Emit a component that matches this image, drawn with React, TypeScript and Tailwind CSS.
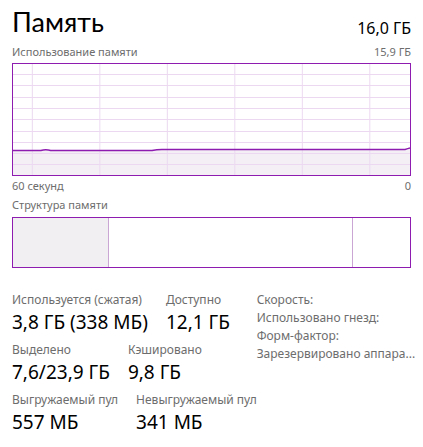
import React from 'react'

const font = { fontFamily: '"Noto Sans", "Open Sans", sans-serif' }

function UsageChart() {
  const vLines = [19, 87, 155, 223, 291, 359]
  const hLines = [10, 21, 33, 44, 55, 67, 78, 89, 100]
  const line = 'M0,86.5 L28,86.5 Q33,85 38,86.5 L140,86.5 Q145,85.5 150,85.5 L395,85.5 Q398,84.5 400,84'
  return (
    <div className="h-[113px] border border-[#8e1cb0] bg-white">
      <svg width="100%" height="100%" viewBox="0 0 400 111" preserveAspectRatio="none" className="block">
        <path d={`${line} L400,111 L0,111 Z`} fill="#f3eff5" />
        {hLines.map((y) => (
          <line key={y} x1="0" x2="400" y1={y + 0.5} y2={y + 0.5} stroke="#ecd9f1" strokeWidth="1" />
        ))}
        {vLines.map((x) => (
          <line key={x} x1={x + 0.5} x2={x + 0.5} y1="0" y2="111" stroke="#ecd9f1" strokeWidth="1" />
        ))}
        <path d={line} fill="none" stroke="#8e1cb0" strokeWidth="1.5" />
      </svg>
    </div>
  )
}

function Stat({ label, value }: { label: string; value: string }) {
  return (
    <div className="flex flex-col whitespace-nowrap">
      <span className="text-[12px] leading-[18px] text-[#6d6d6d]">{label}</span>
      <span className="text-[19px] leading-[26px] text-black">{value}</span>
    </div>
  )
}

export default function App() {
  return (
    <div className="w-[423px] h-[447px] bg-white px-3 overflow-hidden" style={font}>
      <div className="flex items-end justify-between pt-[2px]">
        <h1 className="text-[27px] leading-[40px] text-black" style={{ fontFamily: 'Lato, "Noto Sans", sans-serif' }}>
          Память
        </h1>
        <span className="text-[16px] leading-[22px] text-black mb-[3px]">16,0 ГБ</span>
      </div>
      <div className="flex justify-between text-[11px] leading-[16px] text-[#6d6d6d] mt-[2px] mb-[3px]">
        <span>Использование памяти</span>
        <span>15,9 ГБ</span>
      </div>
      <UsageChart />
      <div className="flex justify-between text-[11px] leading-[20px] text-[#6d6d6d]">
        <span>60 секунд</span>
        <span>0</span>
      </div>
      <div className="text-[11px] leading-[16px] text-[#6d6d6d] mt-[1px]">Структура памяти</div>
      <div className="flex h-[51px] border border-[#8e1cb0] mt-[4px]">
        <div className="w-[96px] bg-[#f2eff3] border-r border-[#c9a6d4]" />
        <div className="flex-1 border-r border-[#c9a6d4]" />
        <div className="w-[57px]" />
      </div>
      <div className="flex mt-[23px]">
        <div className="w-[252px] flex flex-col gap-[6px]">
          <div className="flex gap-[18px]">
            <Stat label="Используется (сжатая)" value="3,8 ГБ (338 МБ)" />
            <Stat label="Доступно" value="12,1 ГБ" />
          </div>
          <div className="flex gap-[18px]">
            <Stat label="Выделено" value="7,6/23,9 ГБ" />
            <Stat label="Кэшировано" value="9,8 ГБ" />
          </div>
          <div className="flex gap-[18px]">
            <Stat label="Выгружаемый пул" value="557 МБ" />
            <Stat label="Невыгружаемый пул" value="341 МБ" />
          </div>
        </div>
        <div className="flex flex-col whitespace-nowrap text-[12px] leading-[18px] text-[#6d6d6d]">
          <span>Скорость:</span>
          <span>Использовано гнезд:</span>
          <span>Форм-фактор:</span>
          <span>Зарезервировано аппара...</span>
        </div>
      </div>
    </div>
  )
}
